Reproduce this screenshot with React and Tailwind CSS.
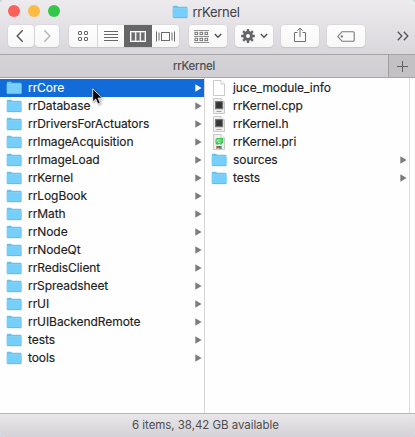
import React from "react";

const folders = [
  "rrCore", "rrDatabase", "rrDriversForActuators", "rrImageAcquisition", "rrImageLoad", "rrKernel",
  "rrLogBook", "rrMath", "rrNode", "rrNodeQt", "rrRedisClient", "rrSpreadsheet", "rrUI",
  "rrUIBackendRemote", "tests", "tools",
];

const files = [
  ["juce_module_info", "blank"],
  ["rrKernel.cpp", "code"],
  ["rrKernel.h", "code"],
  ["rrKernel.pri", "pri"],
  ["sources", "folder"],
  ["tests", "folder"],
];

function Folder() {
  return (
    <svg width="16" height="14" viewBox="0 0 16 14" className="shrink-0">
      <path d="M.8 1.8Q.8.8 1.8.8H5l1.2 1h8.3q1 0 1 1v9.3q0 .6-.7.6H1.5q-.7 0-.7-.6z" fill="#67c3ee" />
      <path d="M.8 3.8h14.7v8.3q0 .6-.7.6H1.5q-.7 0-.7-.6z" fill="#75cffa" />
      <path d="M.8 3.6h14.7" stroke="#91d9f9" strokeWidth=".7" />
      <path d="M1.2 12.7h14" stroke="#5aafd9" strokeWidth=".7" />
    </svg>
  );
}

function FileIcon({ kind }) {
  if (kind === "folder") return <Folder />;
  return (
    <svg width="16" height="16" viewBox="0 0 16 16" className="shrink-0">
      <path d="M2.5.5h7.5l3.5 3.5v11.5h-11z" fill={kind === "blank" ? "#fefefe" : "#efefef"} stroke="#bdbdbd" strokeWidth=".8" />
      <path d="M10 .5v3.5h3.5" fill="#fff" stroke="#c4c4c4" strokeWidth=".8" />
      {kind === "code" && (
        <>
          <rect x="4" y="3" width="8.2" height="8.2" rx=".5" fill="#747474" />
          <rect x="5.2" y="4.2" width="5.8" height="5.8" fill="#343537" />
          <path d="M5.5 13.5h5" stroke="#9a9a9a" strokeWidth=".9" />
        </>
      )}
      {kind === "pri" && (
        <>
          <path d="M4.5 5.2 6 4h6.2v4.5L9.8 11 8.7 9.8 6 11 4.4 9z" fill="#38cb50" />
          <path d="M6.1 7.9V6.1h4.3M7.1 8.3h2.5" stroke="#e8f8e9" strokeWidth=".9" fill="none" />
          <text x="8" y="14.6" textAnchor="middle" fontSize="3.6" fontWeight="700" fill="#222">PRI</text>
        </>
      )}
    </svg>
  );
}

function Row({ name, kind = "folder", selected = false }) {
  return (
    <li className={`flex h-[18px] items-center pl-1.5 pr-[2px] ${selected ? "bg-[#116bd9] text-white" : "text-[#202020]"}`}>
      <span className="flex w-[22px] shrink-0 items-center"><FileIcon kind={kind} /></span>
      <span className="flex-1 whitespace-nowrap text-[12px] leading-[18px] tracking-[-0.07px] [-webkit-text-stroke:0.15px_currentColor]">{name}</span>
      {kind === "folder" && (
        <svg width="7" height="8" viewBox="0 0 7 8" className={selected ? "text-white" : "text-[#7c7c7e]"}>
          <path d="M.3.3 6.6 4 .3 7.7z" fill="currentColor" />
        </svg>
      )}
    </li>
  );
}

const buttonClass = "flex h-[22px] items-center justify-center rounded-[4px] bg-gradient-to-b from-[#fefefe] to-[#f8f7f8] shadow-[0_0_0_0.5px_#d3d0d4,0_1px_1px_#bdbabf]";

function Chevron() {
  return <svg width="8" height="6" viewBox="0 0 8 6"><path d="m.8 1 3.2 3.2L7.2 1" fill="none" stroke="#555" strokeWidth="1.5" /></svg>;
}

function Gear() {
  return (
    <svg width="14" height="14" viewBox="0 0 14 14" fill="none" stroke="#646466">
      <circle cx="7" cy="7" r="3.5" strokeWidth="3" />
      {[0, 45, 90, 135, 180, 225, 270, 315].map((a) => (
        <path key={a} d="M7 .1v2.8" strokeWidth="2.4" transform={`rotate(${a} 7 7)`} />
      ))}
    </svg>
  );
}

function Toolbar() {
  return (
    <div className="flex h-[22px] pl-2" aria-label="Toolbar">
      <button className={`${buttonClass} w-[26px]`}>
        <svg width="8" height="14" viewBox="0 0 8 14" className="-translate-x-px"><path d="M6.7 1.3 1.2 7l5.5 5.7" fill="none" stroke="#555" strokeWidth="1.4" /></svg>
      </button>
      <button className={`${buttonClass} ml-px w-6`}>
        <svg width="8" height="14" viewBox="0 0 8 14"><path d="M1.3 1.3 6.8 7l-5.5 5.7" fill="none" stroke="#b5b4b6" strokeWidth="1.4" /></svg>
      </button>

      <div className={`${buttonClass} ml-[10px] w-[110px] overflow-hidden`}>
        <button className="flex h-full w-[29px] items-center justify-center border-r border-[#d8d6d9]">
          <svg width="11" height="11" viewBox="0 0 11 11" fill="none" stroke="#656566">
            <rect x=".5" y=".5" width="3" height="3" rx=".5" /><rect x="6.5" y=".5" width="3" height="3" rx=".5" />
            <rect x=".5" y="6.5" width="3" height="3" rx=".5" /><rect x="6.5" y="6.5" width="3" height="3" rx=".5" />
          </svg>
        </button>
        <button className="flex h-full w-[26px] items-center justify-center">
          <svg width="14" height="12" viewBox="0 0 14 12"><path d="M0 1.5h14M0 4.5h14M0 7.5h14M0 10.5h14" stroke="#666" /></svg>
        </button>
        <button className="flex h-full w-7 items-center justify-center bg-[#666568]">
          <svg width="16" height="11" viewBox="0 0 16 11" fill="none">
            <rect x=".5" y=".5" width="15" height="10" fill="#a5a4a6" stroke="#fff" />
            <path d="M2 2h2.8v7H2zM6.6 2h2.8v7H6.6zM11.2 2H14v7h-2.8z" fill="#6c6b6e" />
            <path d="M5.7 1v9M10.3 1v9" stroke="#fff" />
          </svg>
        </button>
        <button className="flex h-full flex-1 items-center justify-center">
          <svg width="19" height="11" viewBox="0 0 19 11" fill="none" stroke="#6c6c6d">
            <path d="M.5 .5v10M3 1.5v8M16 1.5v8M18.5.5v10" />
            <rect x="5.5" y="1.5" width="8" height="8" />
          </svg>
        </button>
      </div>

      <button className={`${buttonClass} ml-[10px] w-[38px] gap-[5px]`}>
        <svg width="15" height="13" viewBox="0 0 15 13" fill="none" stroke="#777">
          <path d="M0 .5h15M0 6.5h15M0 12.5h15" strokeWidth=".8" />
          {[1, 6, 11].map((x) => <g key={x}><rect x={x} y="2.3" width="2.6" height="2.3" /><rect x={x} y="8.3" width="2.6" height="2.3" /></g>)}
        </svg>
        <Chevron />
      </button>
      <button className={`${buttonClass} ml-2 w-[38px] gap-[5px]`}><Gear /><Chevron /></button>
      <button className={`${buttonClass} ml-2 w-[38px]`}>
        <svg width="12" height="16" viewBox="0 0 12 16" fill="none" stroke="#707071" className="-translate-y-px">
          <path d="M3.5 5.5h-3v9h11v-9h-3M6 10V1M3.2 3.8 6 1l2.8 2.8" />
        </svg>
      </button>
      <button className={`${buttonClass} ml-2 w-[38px]`}>
        <svg width="18" height="11" viewBox="0 0 18 11" fill="none" stroke="#777" strokeWidth="1.1">
          <path d="M5 .7h11.2q1 0 1 1v7.6q0 1-1 1H5L.8 5.5z" /><circle cx="4.8" cy="5.5" r=".6" fill="#777" />
        </svg>
      </button>
      <button className="ml-8 flex items-center">
        <svg width="12" height="10" viewBox="0 0 12 10"><path d="m.8.8 4 4.2-4 4.2M6.8.8l4 4.2-4 4.2" fill="none" stroke="#555" strokeWidth="1.35" /></svg>
      </button>
    </div>
  );
}

export default function App() {
  return (
    <div className="relative h-[437px] w-[415px] overflow-hidden bg-[#c8d6dc] font-['Inter','Liberation_Sans',sans-serif]">
      <div className="flex h-full w-full flex-col overflow-hidden rounded-[5px] bg-white">
        <header className="h-[54px] shrink-0 bg-gradient-to-b from-[#eeebef] to-[#dad7dc]">
          <div className="grid h-[25px] grid-cols-[1fr_auto_1fr] items-center">
            <div className="flex gap-2 pb-[3px] pl-2">
              <span className="h-3 w-3 rounded-full bg-[#fc605b]" />
              <span className="h-3 w-3 rounded-full bg-[#fdbc40]" />
              <span className="h-3 w-3 rounded-full bg-[#34c84a]" />
            </div>
            <div className="flex items-center gap-1 pb-px pr-[3px] text-[13px] leading-4 tracking-[-0.3px] text-[#414042]"><Folder />rrKernel</div>
          </div>
          <Toolbar />
        </header>

        <div className="flex h-6 shrink-0 border-y border-[#a6a4a8] bg-gradient-to-b from-[#d6d3d7] to-[#d0ced2]">
          <div className="flex flex-1 items-center justify-center pt-px text-[11.5px] tracking-[-0.2px] text-[#4a494c] [-webkit-text-stroke:0.15px_currentColor]">rrKernel</div>
          <button className="flex w-[27px] items-center justify-center border-l border-[#a09ea2] bg-[#c3c1c4]">
            <svg width="11" height="11" viewBox="0 0 11 11"><path d="M0 5.5h11M5.5 0v11" stroke="#606062" /></svg>
          </button>
        </div>

        <main className="flex min-h-0 flex-1 bg-[#fefefe]">
          <ul className="w-[205px] border-r border-[#d7d7da] pt-px">
            {folders.map((name, i) => <Row key={name} name={name} selected={i === 0} />)}
          </ul>
          <ul className="w-[205px] border-r border-[#dededf] pt-px">
            {files.map(([name, kind]) => <Row key={name} name={name} kind={kind} />)}
          </ul>
        </main>

        <footer className="flex h-6 shrink-0 items-center justify-center border-t border-[#b8b6ba] bg-gradient-to-b from-[#eae7eb] to-[#d5d2d7] pr-1 text-[11.5px] tracking-[-0.05px] text-[#4d4c4e]">
          6 items, 38,42 GB available
        </footer>
      </div>

      <svg width="13" height="18" viewBox="0 0 13 18" className="absolute left-[92px] top-[88px] drop-shadow-[1px_1px_1px_rgba(0,0,0,0.35)]">
        <path d="M.7.8v13.1l3-2.9 2.2 5 2.4-1-2.2-4.9h4.3z" fill="#090909" stroke="#fff" strokeWidth=".8" />
      </svg>
    </div>
  );
}
